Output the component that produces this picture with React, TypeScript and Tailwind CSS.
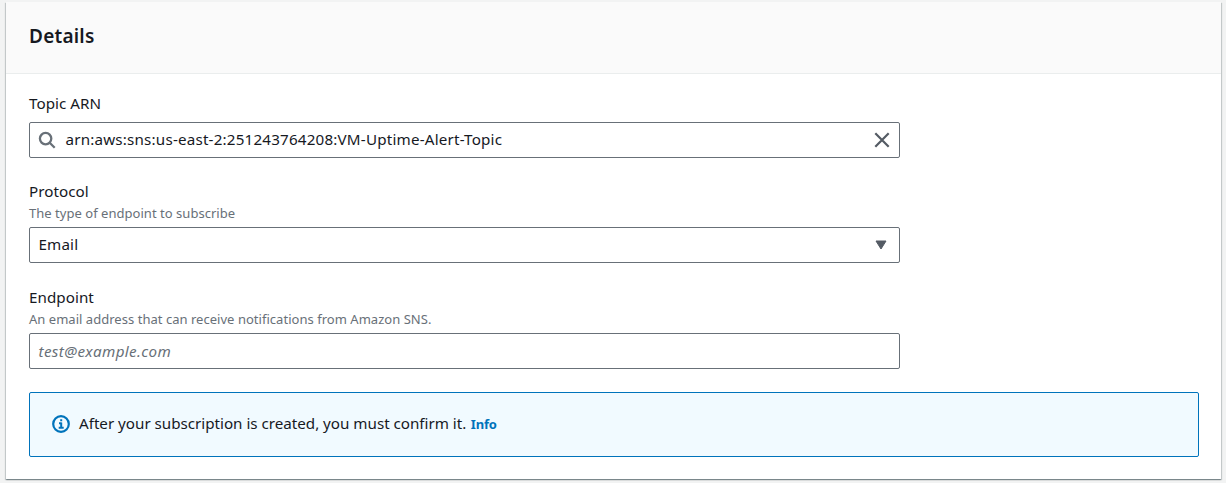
import React from "react";

function Label({ title, hint }: { title: string; hint?: string }) {
  return (
    <div>
      <div className="h-[22px] whitespace-nowrap text-[15.2px] leading-[22px] tracking-[0.05px]"><span>{title}</span></div>
      {hint && <div className="h-[22px] whitespace-nowrap text-[13px] leading-[22px] tracking-[0.03px] text-[#687078]"><span>{hint}</span></div>}
    </div>
  );
}

export default function App() {
  return (
    <div className="h-[483px] overflow-hidden bg-[#f2f3f3] pl-[6px] pr-[5px] pt-[2px] font-['Noto_Sans',sans-serif] text-[#16191f]">
      <section className="h-[477px] bg-white shadow-[0_1px_1px_0_rgba(0,28,36,0.3),1px_1px_1px_0_rgba(0,28,36,0.15),-1px_1px_1px_0_rgba(0,28,36,0.15)]">
        <header className="flex h-[72px] items-center border-b border-[#eaeded] bg-[#fafafa] px-[23px] pb-[3px]">
          <h2 className="text-[19px] font-semibold leading-6 tracking-[0.22px]"><span>Details</span></h2>
        </header>
        <div className="flex flex-col pl-[23px] pr-[22px] pt-[18px]">
          <Label title="Topic ARN" />
          <div className="mt-[8px] flex h-9 w-[871px] items-center rounded-[2px] border border-[#687078] pl-2 pr-[9px]">
            <svg className="size-[18px]" viewBox="0 0 18 18" fill="none" stroke="#687078" strokeWidth="2.3"><circle cx="7.6" cy="7.6" r="5.7" /><path d="m11.7 11.7 5 5" /></svg>
            <span className="ml-[9.5px] flex-1 pb-[2px] text-[15.2px] leading-[22px] tracking-[0.19px]">arn:aws:sns:us-east-2:251243764208:VM-Uptime-Alert-Topic</span>
            <svg className="size-4" viewBox="0 0 16 16" stroke="#545b64" strokeWidth="2.2"><path d="m1.3 1.3 13.4 13.4M14.7 1.3 1.3 14.7" /></svg>
          </div>
          <div className="mt-[22px]"><Label title="Protocol" hint="The type of endpoint to subscribe" /></div>
          <div className="mt-[3px] flex h-9 w-[871px] items-center justify-between rounded-[2px] border border-[#687078] pl-[8.5px] pr-[12px]">
            <span className="pb-[2px] text-[15.2px] leading-[22px] tracking-[0.15px]">Email</span>
            <svg className="h-[10px] w-3" viewBox="0 0 12 10" fill="#545b64" stroke="#545b64" strokeLinejoin="round"><path d="M1 1h10L6 9z" /></svg>
          </div>
          <div className="mt-[23px]"><Label title="Endpoint" hint="An email address that can receive notifications from Amazon SNS." /></div>
          <div className="mt-[3px] flex h-9 w-[871px] items-center rounded-[2px] border border-[#687078] px-[8.5px]">
            <span className="text-[15.2px] italic leading-[22px] tracking-[0.36px] text-[#687078]">test@example.com</span>
          </div>
          <div className="mt-[23px] flex h-[65px] items-center rounded-[2px] border border-[#0073bb] bg-[#f1faff] px-[22px] pb-[2px]">
            <svg className="size-[18px]" viewBox="0 0 18 18" fill="none" stroke="#0073bb" strokeWidth="2.2"><circle cx="9" cy="9" r="7.8" /><path strokeWidth="2" d="M9.2 7.5V13M9.2 4.2v2M7 8.3h2.5M6.7 12.7h5" /></svg>
            <span className="ml-[9px] pb-[2px] text-[15.2px] leading-[22px] tracking-[-0.015px]">After your subscription is created, you must confirm it.</span>
            <a className="ml-[4.5px] text-[13px] font-bold leading-[22px] tracking-[-0.15px] text-[#0073bb]">Info</a>
          </div>
        </div>
      </section>
    </div>
  );
}
